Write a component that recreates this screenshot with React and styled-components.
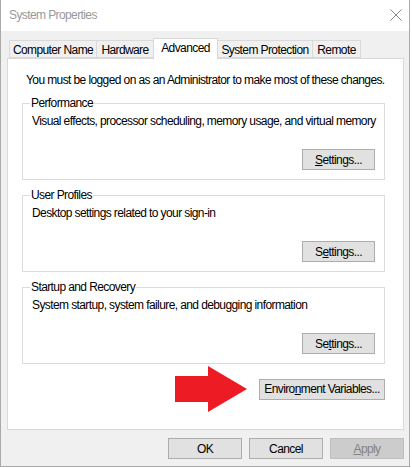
import React from "react";
import styled, { createGlobalStyle } from "styled-components";

const Global = createGlobalStyle`
  html, body { margin: 0; padding: 0; background: #ffffff; }
  body {
    font-family: "Liberation Sans", Arial, sans-serif;
    font-size: 12px;
    letter-spacing: -0.6px;
    color: #000;
  }
  * { box-sizing: border-box; }
`;

const Window = styled.div`
  width: 410px;
  height: 467px;
  border: 1px solid #aaaaaa;
  border-top: none;
  display: flex;
  flex-direction: column;
  background: #f0f0f0;
`;

const TitleBar = styled.div`
  height: 31px;
  background: #ffffff;
  display: flex;
  align-items: center;
  justify-content: space-between;
  padding: 0 7px 1px 8px;
`;

const Title = styled.span`
  color: #999999;
  font-size: 12px;
`;

const Close = styled.svg`
  width: 12px;
  height: 12px;
`;

const Body = styled.div`
  flex: 1;
  display: flex;
  flex-direction: column;
  padding: 7px 5px 0 6px;
`;

const TabStrip = styled.div`
  display: flex;
  align-items: flex-end;
  height: 20px;
  padding-left: 2px;
  position: relative;
  z-index: 1;
`;

const Tab = styled.div`
  width: ${(p) => p.$w}px;
  height: ${(p) => (p.$active ? 21 : 18)}px;
  margin-bottom: ${(p) => (p.$active ? -1 : 0)}px;
  margin-left: -1px;
  border: 1px solid #d9d9d9;
  border-bottom: ${(p) => (p.$active ? "none" : "1px solid #d9d9d9")};
  background: ${(p) => (p.$active ? "#ffffff" : "#f0f0f0")};
  display: flex;
  align-items: ${(p) => (p.$active ? "flex-start" : "center")};
  padding-top: ${(p) => (p.$active ? 2 : 1)}px;
  justify-content: center;
  white-space: nowrap;
  position: relative;
  z-index: ${(p) => (p.$active ? 2 : 1)};
  &:first-child { margin-left: 0; }
`;

const Panel = styled.div`
  width: 397px;
  height: 372px;
  background: #ffffff;
  border: 1px solid #d9d9d9;
  display: flex;
  flex-direction: column;
  padding: 14px 18px 0 14px;
`;

const Intro = styled.div`
  line-height: 15px;
  padding-left: 4px;
  white-space: nowrap;
  margin-bottom: 8px;
`;

const Group = styled.fieldset`
  margin: 0;
  min-width: 0;
  width: 363px;
  border: 1px solid #dcdcdc;
  padding: 0 9px 9px 9px;
  display: flex;
  flex-direction: column;
  & + & { margin-top: 8px; }
`;

const Legend = styled.legend`
  padding: 0 1px;
  margin-left: -2px;
  line-height: 15px;
`;

const Desc = styled.div`
  line-height: 15px;
  margin-top: 3px;
  white-space: nowrap;
`;

const Button = styled.button`
  font-family: inherit;
  font-size: 12px;
  letter-spacing: inherit;
  white-space: nowrap;
  width: ${(p) => p.$w || 73}px;
  height: 21px;
  padding: 0;
  background: ${(p) => (p.$disabled ? "#cccccc" : "#e1e1e1")};
  border: 1px solid ${(p) => (p.$disabled ? "#bfbfbf" : "#adadad")};
  color: ${(p) => (p.$disabled ? "#838383" : "#000000")};
  display: flex;
  align-items: center;
  justify-content: center;
`;

const GroupButton = styled(Button)`
  align-self: flex-end;
  margin-top: 20px;
`;

const EnvRow = styled.div`
  display: flex;
  align-items: center;
  justify-content: flex-end;
  gap: 11px;
  margin-top: 1px;
`;

const Arrow = styled.svg`
  width: 74px;
  height: 48px;
`;

const Footer = styled.div`
  display: flex;
  justify-content: flex-end;
  gap: 7px;
  padding: 8px 0 0 0;
`;

const tabs = [
  { label: "Computer Name", w: 88 },
  { label: "Hardware", w: 58 },
  { label: "Advanced", w: 65, active: true },
  { label: "System Protection", w: 96 },
  { label: "Remote", w: 49 },
];

const groups = [
  {
    title: "Performance",
    desc: "Visual effects, processor scheduling, memory usage, and virtual memory",
    btn: (
      <>
        <u>S</u>ettings...
      </>
    ),
  },
  {
    title: "User Profiles",
    desc: "Desktop settings related to your sign-in",
    btn: (
      <>
        S<u>e</u>ttings...
      </>
    ),
  },
  {
    title: "Startup and Recovery",
    desc: "System startup, system failure, and debugging information",
    btn: (
      <>
        Se<u>t</u>tings...
      </>
    ),
  },
];

export default function App() {
  return (
    <>
      <Global />
      <Window>
        <TitleBar>
          <Title>System Properties</Title>
          <Close viewBox="0 0 12 12">
            <path d="M0.5 0.5 L11.5 11.5 M11.5 0.5 L0.5 11.5" stroke="#8a8a8a" strokeWidth="1" fill="none" />
          </Close>
        </TitleBar>
        <Body>
          <TabStrip>
            {tabs.map((t) => (
              <Tab key={t.label} $w={t.w} $active={t.active}>
                {t.label}
              </Tab>
            ))}
          </TabStrip>
          <Panel>
            <Intro>You must be logged on as an Administrator to make most of these changes.</Intro>
            {groups.map((g) => (
              <Group key={g.title}>
                <Legend>{g.title}</Legend>
                <Desc>{g.desc}</Desc>
                <GroupButton>{g.btn}</GroupButton>
              </Group>
            ))}
            <EnvRow>
              <Arrow viewBox="0 0 74 48">
                <path d="M1 11 H34 V1 L73 24 L34 47 V37 H1 Z" fill="#ed1c24" />
              </Arrow>
              <Button $w={126}>
                Enviro<u>n</u>ment Variables...
              </Button>
            </EnvRow>
          </Panel>
          <Footer>
            <Button $w={74}>OK</Button>
            <Button $w={74}>Cancel</Button>
            <Button $w={74} $disabled>
              <u>A</u>pply
            </Button>
          </Footer>
        </Body>
      </Window>
    </>
  );
}
